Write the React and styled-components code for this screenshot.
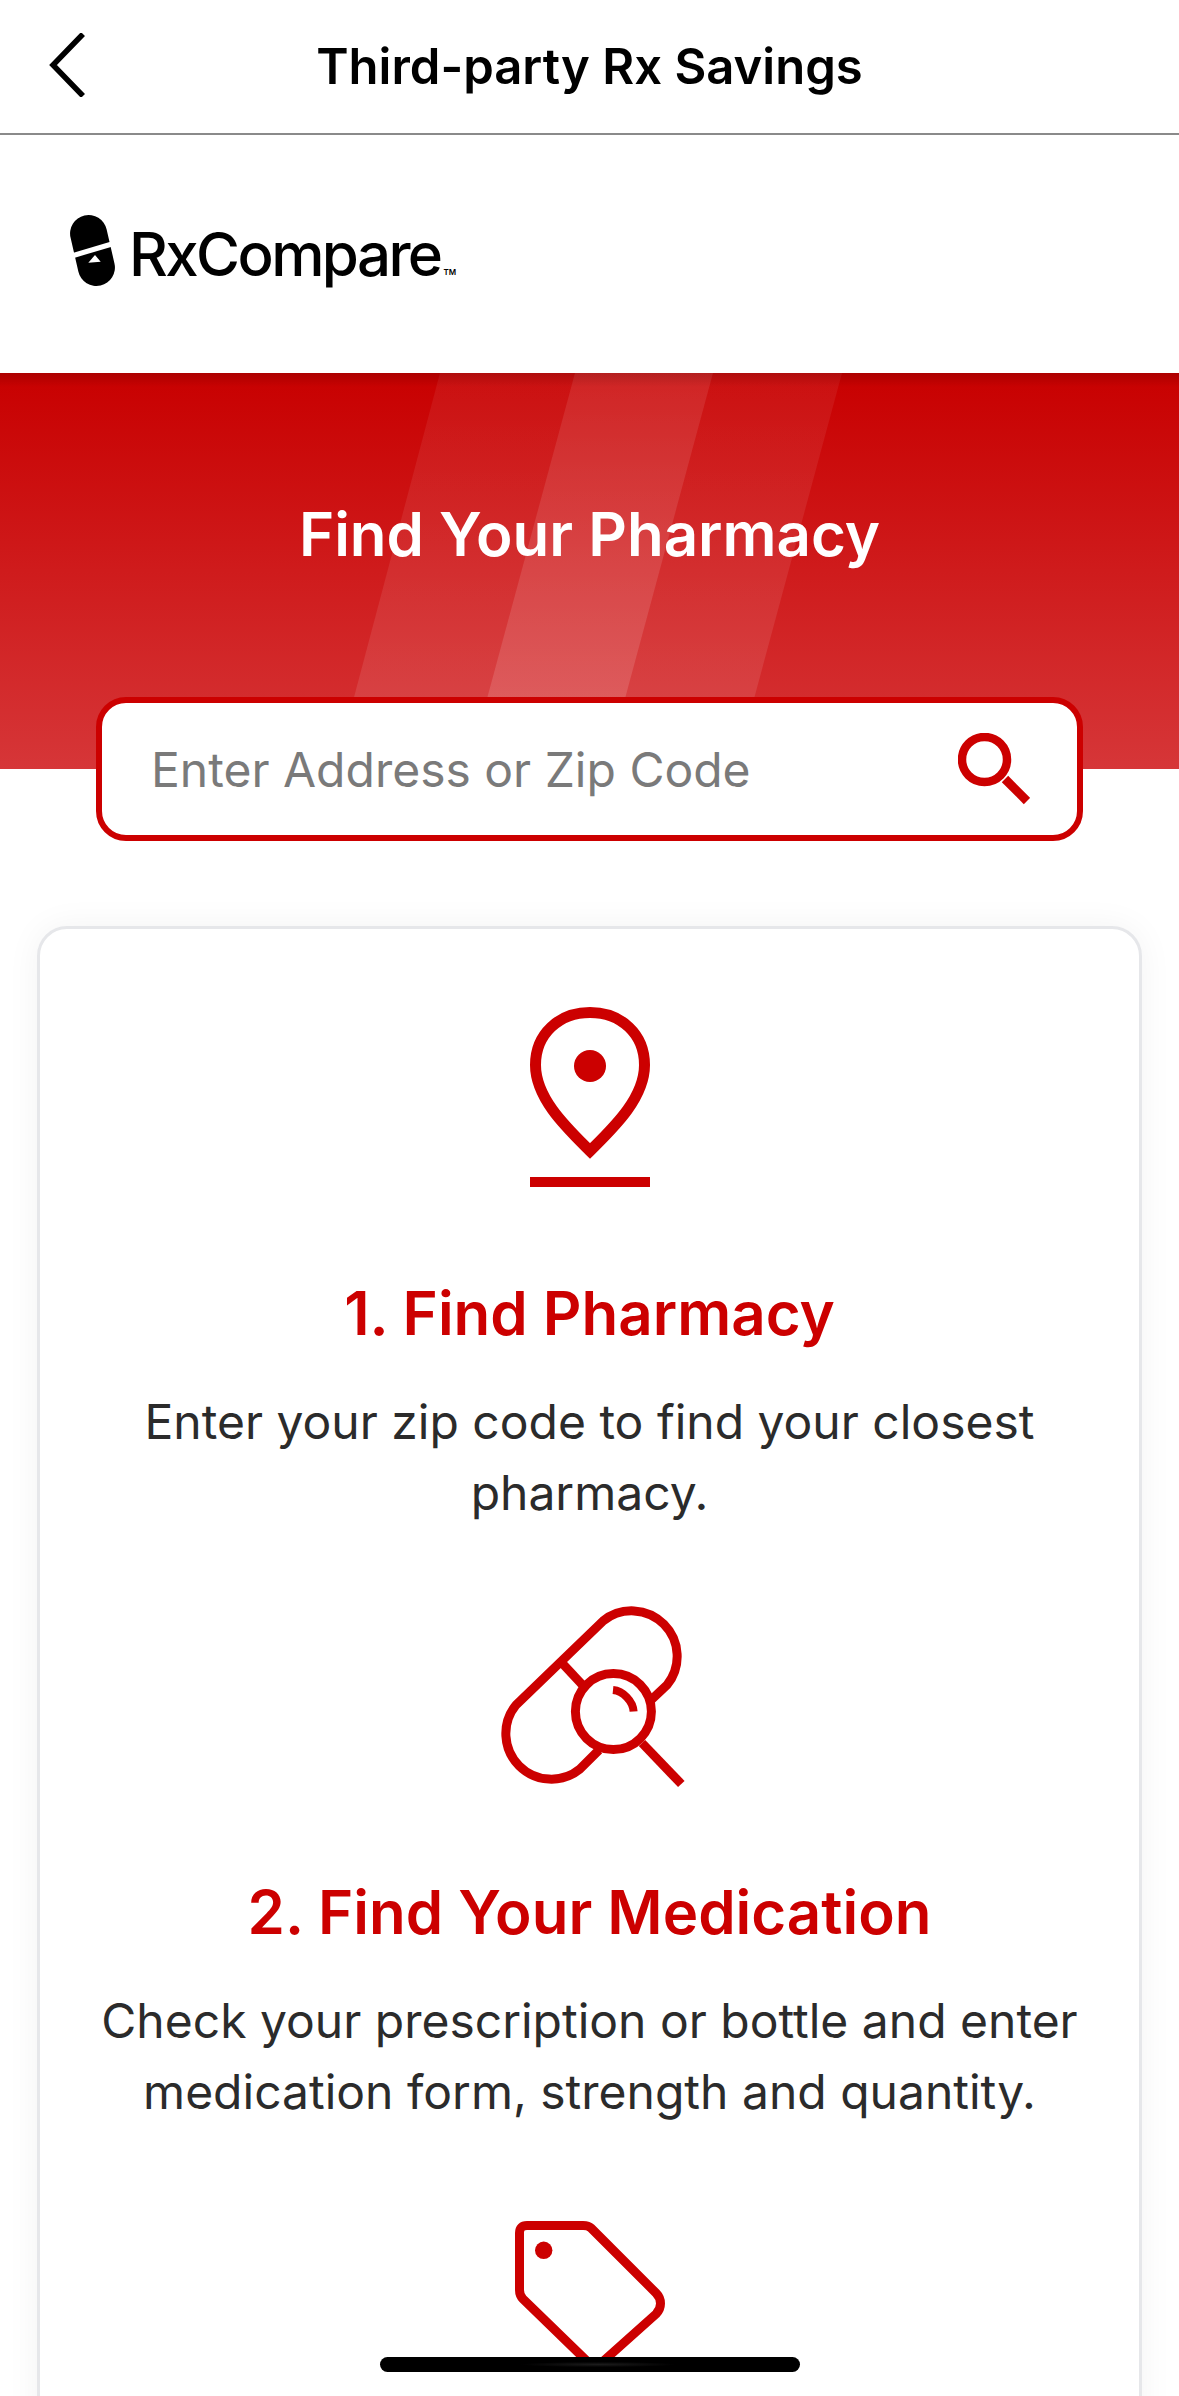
import React from 'react'
import styled, { createGlobalStyle } from 'styled-components'

const RED = '#cc0000'

const BackIcon = () => (
  <svg width="40" height="64" viewBox="0 0 40 64" fill="none">
    <path d="M35 1 L5 32 L35 63" stroke="#000" strokeWidth="5.5" />
  </svg>
)

const PillLogo = () => (
  <svg width="50" height="73" viewBox="0 0 50 73">
    <rect x="6" y="0.5" width="37" height="72" rx="18.5" fill="#000" transform="rotate(-13 24.5 36.5)" />
    <path d="M2 42.5 L49 28.5" stroke="#fff" strokeWidth="5" />
    <path d="M27 41 L20.3 48.7 L32.7 47.7 Z" fill="#fff" />
  </svg>
)

const SearchIcon = () => (
  <svg width="72" height="72" viewBox="0 0 72 72" fill="none" stroke={RED}>
    <circle cx="26.5" cy="26.5" r="22.5" strokeWidth="8.5" />
    <path d="M47 46 L69 68" strokeWidth="9" />
  </svg>
)

const PinIcon = () => (
  <svg width="120" height="180" viewBox="0 0 120 180" fill="none">
    <path stroke={RED} strokeWidth="11" d="M60 144 C38 122 5.5 92 5.5 58 C5.5 27 29 5.5 60 5.5 C91 5.5 114.5 27 114.5 58 C114.5 92 82 122 60 144 Z" />
    <circle cx="60" cy="59" r="16" fill={RED} />
    <rect x="0" y="170" width="120" height="10" fill={RED} />
  </svg>
)

const PillSearchIcon = () => (
  <svg width="191" height="188" viewBox="-2 0 191 188" fill="none" stroke={RED} strokeWidth="9">
    <path d="M103 150 L84 169 A45.5 45.5 0 0 1 20 105 L107 21 A45.5 45.5 0 0 1 171 85 L154 101" />
    <path d="M66 63 L86.5 85" />
    <circle cx="117.4" cy="111.6" r="38" />
    <path d="M117 90 C127 91 137 101 137.6 111.6" strokeWidth="8" />
    <path d="M146 143 L185.3 184" />
  </svg>
)

const TagIcon = () => (
  <svg width="150" height="160" viewBox="0 0 150 160" fill="none">
    <path stroke={RED} strokeWidth="9" d="M12 4.5 L68 4.5 C71 4.5 74 5 76 7 L141 72 C147 78 147 87 141 93 L85 143 Q80 147 75 143 L8 78 C5 75 4.5 73 4.5 69 L4.5 12 C4.5 7 7 4.5 12 4.5 Z" />
    <circle cx="28.7" cy="29.3" r="8.7" fill={RED} />
  </svg>
)

const App = () => {
  return (
    <Page>
      <GlobalStyle />
      <TopBar>
        <BackButton><BackIcon /></BackButton>
        <TopTitle>Third-party Rx Savings</TopTitle>
      </TopBar>
      <LogoRow>
        <LogoPill><PillLogo /></LogoPill>
        <LogoText>RxCompare</LogoText>
        <LogoMark>TM</LogoMark>
      </LogoRow>
      <Hero>
        <Stripes viewBox="0 0 1179 396" preserveAspectRatio="none">
          <defs>
            <linearGradient id="soft" x1="0" y1="0" x2="0" y2="1">
              <stop offset="0" stopColor="#fff" stopOpacity="0.06" />
              <stop offset="1" stopColor="#fff" stopOpacity="0.11" />
            </linearGradient>
            <linearGradient id="strong" x1="0" y1="0" x2="0" y2="1">
              <stop offset="0" stopColor="#fff" stopOpacity="0.14" />
              <stop offset="1" stopColor="#fff" stopOpacity="0.24" />
            </linearGradient>
          </defs>
          <polygon points="440,0 575,0 468,396 335,396" fill="url(#soft)" />
          <polygon points="575,0 713,0 606,396 468,396" fill="url(#strong)" />
          <polygon points="713,0 842,0 735,396 606,396" fill="url(#soft)" />
        </Stripes>
        <HeroTitle>Find Your Pharmacy</HeroTitle>
      </Hero>
      <SearchBox>
        <Placeholder>Enter Address or Zip Code</Placeholder>
        <SearchIcon />
      </SearchBox>
      <Card>
        <Step>
          <StepIcon $below="90px"><PinIcon /></StepIcon>
          <StepTitle>1. Find Pharmacy</StepTitle>
          <StepText>Enter your zip code to find your closest pharmacy.</StepText>
        </Step>
        <Step $above="72px">
          <StepIcon $below="88px"><PillSearchIcon /></StepIcon>
          <StepTitle>2. Find Your Medication</StepTitle>
          <StepText>Check your prescription or bottle and enter medication form, strength and quantity.</StepText>
        </Step>
        <Step $above="94px">
          <StepIcon><TagIcon /></StepIcon>
        </Step>
      </Card>
      <HomeIndicator />
    </Page>
  )
}

export default App

const GlobalStyle = createGlobalStyle`
  html, body {
    margin: 0;
    padding: 0;
    background: #fff;
  }
`

const Page = styled.div`
  position: relative;
  width: 1179px;
  height: 2396px;
  overflow: hidden;
  background: #fff;
  font-family: Inter, "Liberation Sans", sans-serif;
`

const TopBar = styled.header`
  position: relative;
  height: 133px;
  display: flex;
  align-items: center;
  justify-content: center;
  border-bottom: 2px solid #8a8a8a;
`

const BackButton = styled.div`
  position: absolute;
  left: 48px;
  top: 33px;
  display: flex;
`

const TopTitle = styled.div`
  font-size: 49px;
  font-weight: 600;
  color: #000;
`

const LogoRow = styled.div`
  height: 238px;
  padding-left: 68px;
  display: flex;
  align-items: center;
  box-sizing: border-box;
`

const LogoPill = styled.div`
  display: flex;
  margin-top: -8px;
`

const LogoText = styled.span`
  margin-left: 11px;
  font-size: 60px;
  font-weight: 500;
  letter-spacing: -2.6px;
  color: #000;
`

const LogoMark = styled.span`
  margin: 36px 0 0 3px;
  font-size: 8px;
  font-weight: 600;
  color: #000;
`

const Hero = styled.section`
  position: relative;
  height: 396px;
  overflow: hidden;
  display: flex;
  justify-content: center;
  background: linear-gradient(180deg, #c80000 0, #d63638 100%);

  &::after {
    content: '';
    position: absolute;
    inset: 0 0 auto 0;
    height: 14px;
    background: linear-gradient(180deg, rgba(0, 0, 0, 0.14), rgba(0, 0, 0, 0));
  }
`

const Stripes = styled.svg`
  position: absolute;
  inset: 0;
  width: 100%;
  height: 100%;
`

const HeroTitle = styled.h1`
  position: relative;
  margin: 126px 0 0;
  font-size: 60px;
  line-height: 70px;
  font-weight: 600;
  color: #fff;
`

const SearchBox = styled.div`
  position: relative;
  box-sizing: border-box;
  width: 987px;
  height: 144px;
  margin: -72px auto 0;
  padding: 0 47px 0 49px;
  display: flex;
  align-items: center;
  justify-content: space-between;
  background: #fff;
  border: 6px solid ${RED};
  border-radius: 30px;
`

const Placeholder = styled.span`
  font-size: 48px;
  color: #7a7a7a;
`

const Card = styled.main`
  box-sizing: border-box;
  width: 1105px;
  min-height: 1600px;
  margin: 85px auto 0;
  padding: 78px 40px 0;
  display: flex;
  flex-direction: column;
  align-items: center;
  border: 3px solid #e6e7ea;
  border-radius: 30px;
  background: #fff;
  box-shadow: 0 0 34px rgba(0, 0, 0, 0.05);
`

const Step = styled.div`
  display: flex;
  flex-direction: column;
  align-items: center;
  margin-top: ${(p) => p.$above || '0'};
`

const StepIcon = styled.div`
  display: flex;
  margin-bottom: ${(p) => p.$below || '0'};
`

const StepTitle = styled.h2`
  margin: 0;
  font-size: 60px;
  line-height: 72px;
  font-weight: 600;
  color: ${RED};
  text-align: center;
`

const StepText = styled.p`
  margin: 37px 0 0;
  font-size: 48px;
  line-height: 71px;
  color: #2b2b2b;
  text-align: center;
`

const HomeIndicator = styled.div`
  position: absolute;
  left: 380px;
  bottom: 24px;
  width: 420px;
  height: 15px;
  border-radius: 8px;
  background: radial-gradient(ellipse at 52% 50%, #1c1c1c 0, #000 25%);
`
